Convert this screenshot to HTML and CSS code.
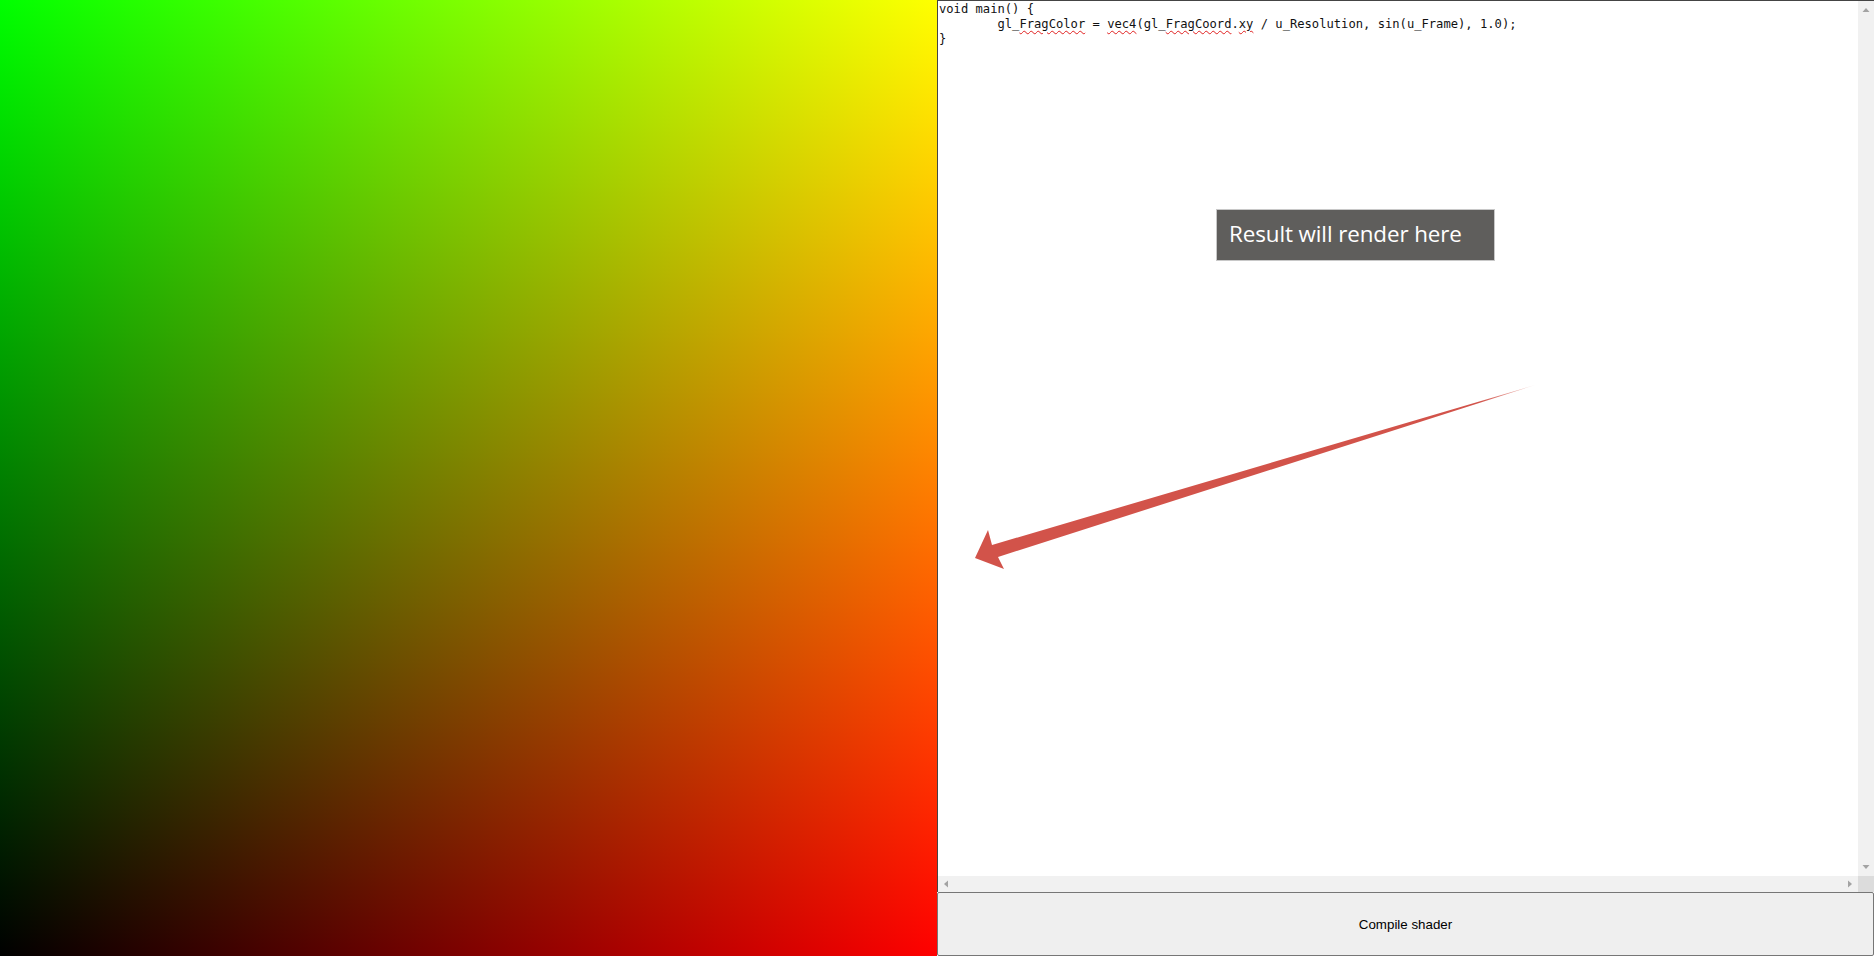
FILE: index.html
```html
<!DOCTYPE html>
<html>
<head>
<meta charset="utf-8">
<link rel="stylesheet" href="styles.css">
</head>
<body>
<div class="app">
  <div class="canvas"></div>
  <div class="side">
    <div class="editor">
      <div class="content">
        <div class="code">
          <div class="line">void main() {</div>
          <div class="line">	gl_<span class="sq">FragColor</span> = <span class="sq">vec4</span>(gl_<span class="sq">FragCoord</span>.<span class="sq">xy</span> / u_Resolution, sin(u_Frame), 1.0);</div>
          <div class="line">}</div>
        </div>
      </div>
      <div class="vbar">
        <svg class="sb-btn" width="16" height="16" viewBox="0 0 16 16"><polygon points="4.5,11 8,7 11.5,11" fill="#a3a3a3"/></svg>
        <svg class="sb-btn" width="16" height="16" viewBox="0 0 16 16"><polygon points="4.5,5 11.5,5 8,9" fill="#a3a3a3"/></svg>
      </div>
      <div class="hbar">
        <svg class="sb-btn" width="16" height="16" viewBox="0 0 16 16"><polygon points="10,4.5 10,11.5 6,8" fill="#a3a3a3"/></svg>
        <svg class="sb-btn" width="16" height="16" viewBox="0 0 16 16"><polygon points="6,4.5 6,11.5 10,8" fill="#a3a3a3"/></svg>
      </div>
      <div class="corner"></div>
    </div>
    <button class="compile">Compile shader</button>
  </div>
</div>
<div class="label">Result will render here</div>
<svg class="arrow" width="1874" height="956" viewBox="0 0 1874 956">
  <defs>
    <linearGradient id="fade" x1="975" y1="558" x2="1535" y2="385" gradientUnits="userSpaceOnUse">
      <stop offset="0" stop-color="#d2534a"/>
      <stop offset="0.9" stop-color="#d2534a"/>
      <stop offset="1" stop-color="#d2534a" stop-opacity="0.3"/>
    </linearGradient>
  </defs>
  <polygon fill="url(#fade)" points="1535,385 992,545 988,530 975,558 1004,569 998,557"/>
</svg>
</body>
</html>
```
FILE: styles.css
```css
html, body {
  margin: 0;
  padding: 0;
  width: 1874px;
  height: 956px;
  overflow: hidden;
  background: #fff;
}
.app {
  display: flex;
  width: 1874px;
  height: 956px;
}
.canvas {
  width: 937px;
  height: 956px;
  flex: none;
  background: linear-gradient(to right, #000, #f00), linear-gradient(to bottom, #0f0, #000);
  background-blend-mode: screen;
}
.side {
  width: 937px;
  display: flex;
  flex-direction: column;
}
.editor {
  box-sizing: border-box;
  height: 892px;
  border-top: 1px solid #444;
  border-left: 1px solid #444;
  background: #fff;
  display: grid;
  grid-template-columns: 1fr 16px;
  grid-template-rows: 1fr 16px;
}
.content {
  overflow: hidden;
  min-width: 0;
  min-height: 0;
}
.vbar {
  background: #f1f1f1;
  display: flex;
  flex-direction: column;
  justify-content: space-between;
}
.hbar {
  background: #f1f1f1;
  display: flex;
  justify-content: space-between;
}
.corner {
  background: #dcdcdc;
}
.sb-btn {
  display: block;
  flex: none;
}
.code {
  padding: 1px 1px;
  font-family: "DejaVu Sans Mono", monospace;
  font-size: 12.15px;
  line-height: 15px;
  color: #111;
  tab-size: 8;
}
.line {
  white-space: pre;
  height: 15px;
}
.sq {
  text-decoration: underline wavy #e02020;
  text-decoration-thickness: 1px;
  text-underline-offset: 2px;
}
.compile {
  box-sizing: border-box;
  height: 64px;
  margin: 0;
  border: 1px solid #767676;
  border-radius: 2px;
  background: #efefef;
  font-family: "Liberation Sans", Arial, sans-serif;
  font-size: 13.33px;
  color: #000;
}
.label {
  position: absolute;
  left: 1216px;
  top: 209px;
  box-sizing: border-box;
  width: 279px;
  height: 52px;
  padding: 0 0 0 12px;
  border: 1px solid #c8c8c8;
  background: #5f5e5c;
  color: #fff;
  font-family: "Open Sans", sans-serif;
  font-size: 22.4px;
  line-height: 48px;
  letter-spacing: -0.1px;
}
.arrow {
  position: absolute;
  left: 0;
  top: 0;
  pointer-events: none;
}
```
